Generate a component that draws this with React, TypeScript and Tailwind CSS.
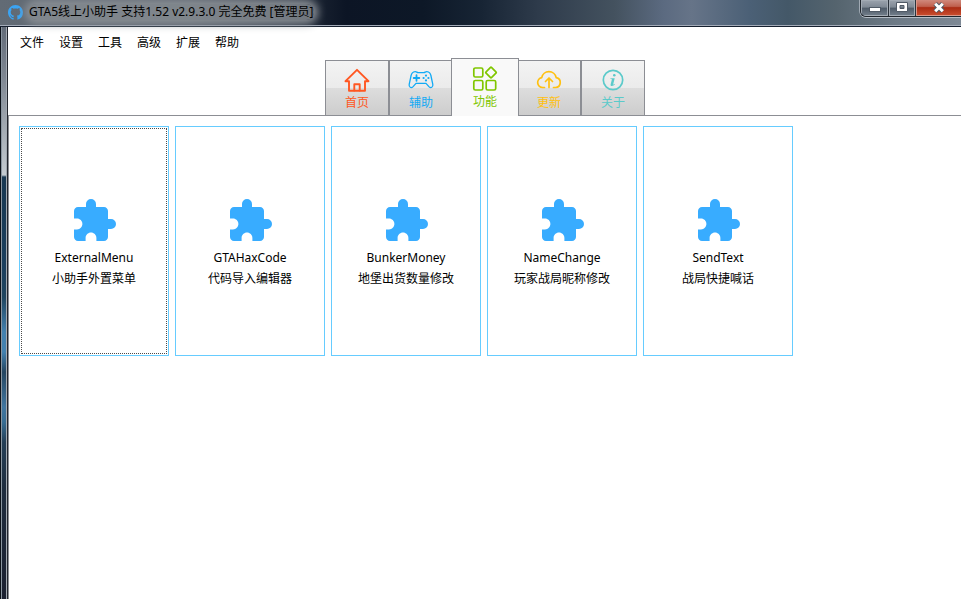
import { useState } from 'react';
import type { ReactNode } from 'react';

const MENUS = ['文件', '设置', '工具', '高级', '扩展', '帮助'];

const CARDS = [
  { name: 'ExternalMenu', desc: '小助手外置菜单' },
  { name: 'GTAHaxCode', desc: '代码导入编辑器' },
  { name: 'BunkerMoney', desc: '地堡出货数量修改' },
  { name: 'NameChange', desc: '玩家战局昵称修改' },
  { name: 'SendText', desc: '战局快捷喊话' },
];

function Glyph({ children }: { children: ReactNode }) {
  return (
    <svg
      viewBox="0 0 26 26"
      className="size-[26px] shrink-0"
      fill="none"
      stroke="currentColor"
      strokeWidth="1.7"
      strokeLinecap="round"
      strokeLinejoin="round"
      aria-hidden="true"
    >
      {children}
    </svg>
  );
}

const HomeGlyph = (
  <Glyph>
    <path d="M1.500 14.200 13 2.800l11.500 11.400H21v9.500H5v-9.500H1.500Z" strokeWidth="1.900" />
    <path d="M10.300 23.500v-6.200h5.400v6.200" strokeWidth="1.900" />
  </Glyph>
);

const PadGlyph = (
  <Glyph>
    <g strokeWidth="1.3">
      <path d="M7.200 4.600C4.400 4.800 3.400 6.400 3 9L1.200 17.400c-.5 2.800 1.900 4.200 3.900 2.200L8 16.400h10l2.900 3.200c2 2 4.400.6 3.900-2.200L23 9c-.4-2.600-1.400-4.200-4.200-4.400-1.300-.1-1.800 1-3.100 1h-5.400c-1.300 0-1.800-1.100-3.100-1Z" />
      <path d="M8.500 8.200v5.600M5.700 11h5.600" strokeWidth="1.800" />
    </g>
    <g fill="currentColor" stroke="none">
      <circle cx="18" cy="8.600" r="1.100" />
      <circle cx="18" cy="13.400" r="1.100" />
      <circle cx="15.600" cy="11" r="1.100" />
      <circle cx="20.400" cy="11" r="1.100" />
    </g>
  </Glyph>
);

const AppsGlyph = (
  <Glyph>
    <rect x="1.800" y="2" width="9" height="9" rx="1.500" />
    <rect x="1.800" y="14.500" width="9" height="9.500" rx="1.500" />
    <rect x="14.200" y="14.500" width="9.500" height="9.500" rx="1.500" />
    <path d="m18.300 1.600-4.200 4.200a1 1 0 0 0 0 1.400l4.200 4.200a1 1 0 0 0 1.400 0l4.200-4.200a1 1 0 0 0 0-1.400l-4.200-4.200a1 1 0 0 0-1.400 0Z" />
  </Glyph>
);

const CloudGlyph = (
  <Glyph>
    <path d="M8.500 20.500H6.500a5 5 0 0 1-.8-9.900 7.400 7.400 0 0 1 14.500 0 5 5 0 0 1-.7 9.900h-2" />
    <path d="M13 20.500v-9M9.500 14.500 13 11l3.500 3.500" />
  </Glyph>
);

const InfoGlyph = (
  <Glyph>
    <circle cx="13" cy="13" r="9.700" />
    <g fill="currentColor" stroke="none">
      <circle cx="14.300" cy="8.300" r="1.300" />
      <path d="M10.300 11.200h4.400l-1.500 6c-.1.500.5.600 1.500-.3l.4.400c-2.200 2.500-5 1.900-4.500.1l1.200-4.700c.2-.8-.3-.9-1.500-.9Z" />
    </g>
  </Glyph>
);

const TABS = [
  { label: '首页', color: 'text-[#ff5722]', icon: HomeGlyph },
  { label: '辅助', color: 'text-[#12aaf5]', icon: PadGlyph },
  { label: '功能', color: 'text-[#80c600]', icon: AppsGlyph },
  { label: '更新', color: 'text-[#ffc010]', icon: CloudGlyph },
  { label: '关于', color: 'text-[#5bcaca]', icon: InfoGlyph },
];

function TitleBar() {
  return (
    <header className="flex h-[27px] shrink-0 items-start justify-between border-b border-[#16202f] bg-[linear-gradient(90deg,#626b75_0%,#59636d_20%,#333d4a_30%,#141d2c_34%,#0c1525_36%,#0d1827_44%,#172434_50%,#2e3b4b_56%,#44525f_64%,#5b6a80_69%,#667488_72%,#4b6076_78%,#445868_82%,#55646e_87%,#6d7a86_93%,#7e8995_100%)] shadow-[inset_0_-1px_#a4acb9]">
      <div className="flex h-6 items-center pl-2">
        <svg viewBox="0 0 16 16" className="mr-[6px] size-[15px]" fill="#3ba4f3" aria-hidden="true">
          <path d="M8 0C3.580 0 0 3.580 0 8c0 3.540 2.290 6.530 5.470 7.590.4.070.550-.170.550-.380 0-.190-.010-.820-.010-1.490-2.010.370-2.530-.490-2.690-.940-.090-.230-.480-.940-.820-1.130-.280-.150-.680-.520-.010-.530.630-.010 1.080.580 1.230.820.720 1.210 1.870.870 2.330.660.070-.520.280-.870.510-1.070-1.780-.2-3.640-.890-3.640-3.950 0-.870.310-1.590.820-2.150-.080-.2-.360-1.020.080-2.120 0 0 .670-.210 2.200.820.640-.180 1.320-.270 2-.270s1.360.090 2 .270c1.530-1.040 2.200-.820 2.200-.820.440 1.100.160 1.920.080 2.120.510.560.820 1.270.820 2.150 0 3.070-1.870 3.750-3.650 3.950.290.250.540.730.540 1.480 0 1.070-.010 1.930-.010 2.200 0 .210.150.460.550.380A8.010 8.010 0 0 0 16 8c0-4.420-3.580-8-8-8Z" />
        </svg>
        <h1 className="rounded-full bg-[#8b9096]/75 text-xs leading-4 whitespace-nowrap shadow-[0_0_8px_4px_#8b9096]">
          GTA5线上小助手 支持1.52 v2.9.3.0 完全免费 [管理员]
        </h1>
      </div>
      <div className="flex h-[17px] overflow-hidden rounded-bl-md border-b border-l border-[#20262d] shadow-[0_1px_#b4bcc5,-1px_0_#a0a9b3]">
        <button
          aria-label="最小化"
          className="flex w-7 items-center justify-center border-r border-[#2b333c] bg-[linear-gradient(#9ba3ad_0%,#7f8994_45%,#4f5b68_50%,#74808c_100%)] shadow-[inset_0_0_0_1px_#a3abb4]"
        >
          <svg viewBox="0 0 12 12" className="size-3" aria-hidden="true">
            <rect x="0.500" y="5.500" width="11" height="4" fill="#fff" stroke="#505a66" />
          </svg>
        </button>
        <button
          aria-label="最大化"
          className="flex w-[27px] items-center justify-center border-r border-[#2b333c] bg-[linear-gradient(#9ba3ad_0%,#7f8994_45%,#4f5b68_50%,#74808c_100%)] shadow-[inset_0_0_0_1px_#a3abb4]"
        >
          <svg viewBox="0 0 12 12" className="size-3" aria-hidden="true">
            <path fillRule="evenodd" d="M.5.500h11v9H.5ZM4 3.500v3h4v-3Z" fill="#fff" stroke="#505a66" />
          </svg>
        </button>
        <button
          aria-label="关闭"
          className="flex w-[45px] items-center justify-center bg-[linear-gradient(#d0897c_0%,#c0604e_40%,#aa2c14_48%,#cc5030_100%)] shadow-[inset_1px_-1px_#d9988a]"
        >
          <svg viewBox="0 0 14 12" className="h-3 w-[14px]" aria-hidden="true">
            <path d="m3.200 1.800 7.600 7.400m0-7.400-7.600 7.400" stroke="#505a66" strokeWidth="5" />
            <path d="m3.200 1.800 7.600 7.400m0-7.400-7.600 7.400" stroke="#fff" strokeWidth="3" />
          </svg>
        </button>
      </div>
    </header>
  );
}

export default function App() {
  const [active, setActive] = useState(2);
  const [focused, setFocused] = useState(0);

  return (
    <div className="flex min-h-screen flex-col bg-white font-['Noto_Sans','Noto_Sans_CJK_SC',sans-serif] text-xs text-black">
      <TitleBar />
      <div className="flex grow">
        <div className="w-2 shrink-0 border-r border-l border-r-[#20242c] border-l-[#0c1118] bg-[linear-gradient(180deg,#626b78_0px,#7f8792_50px,#c4cbd1_148px,#183852_150px,#1b3f5e_240px,#20455f_270px,#4381af_305px,#4381af_325px,#254661_345px,#4176a0_380px,#386d93_395px,#253f57_415px,#1f2d3f_460px,#1b2030_572px)] shadow-[inset_1px_0_#8a95a0,inset_-1px_0_#a3a9b1]" />
        <div className="flex min-w-0 grow flex-col">
          <nav className="flex h-[31px] items-center gap-[15px] px-3">
            {MENUS.map((m) => (
              <button key={m}>{m}</button>
            ))}
          </nav>
          <div className="flex grow flex-col">
            <div role="tablist" className="flex h-[58px] items-end justify-center border-b border-[#8c8e94] pl-px">
              {TABS.map((tab, i) => (
                <button
                  key={tab.label}
                  role="tab"
                  aria-selected={active === i}
                  onClick={() => setActive(i)}
                  className={
                    active === i
                      ? `${tab.color} z-10 -mx-0.5 -mb-px flex h-[58px] w-[68px] flex-col items-center border border-b-0 border-[#8c8e94] bg-[#f9f9f9] pt-[7px]`
                      : `${tab.color} flex h-[55px] w-16 flex-col items-center border border-b-0 border-[#8c8e94] bg-[linear-gradient(#f3f3f3_0%,#ebebeb_50%,#dddddd_50%,#cdcdcd_100%)] pt-[6px]`
                  }
                >
                  {tab.icon}
                  <span className="leading-5">{tab.label}</span>
                </button>
              ))}
            </div>
            <main className="flex grow flex-wrap content-start gap-[6px] border-l border-[#8c8e94] p-[10px]">
              {CARDS.map((card, i) => (
                <button
                  key={card.name}
                  onClick={() => setFocused(i)}
                  className="flex h-[230px] w-[150px] border border-[#66ccff] p-px outline-none"
                >
                  <span
                    className={
                      focused === i
                        ? 'flex h-full grow flex-col items-center justify-center border border-dotted border-[#4a4a4a] pt-1'
                        : 'flex h-full grow flex-col items-center justify-center border border-transparent pt-1'
                    }
                  >
                    <svg viewBox="0 0 24 24" className="size-12" fill="#38acff" aria-hidden="true">
                      <path d="M20.500 11H19V7c0-1.100-.9-2-2-2h-4V3.500a2.500 2.500 0 0 0-5 0V5H4c-1.100 0-2 .9-2 2v3.800h1.500c1.490 0 2.700 1.210 2.700 2.700s-1.210 2.700-2.700 2.700H2V20c0 1.100.9 2 2 2h3.800v-1.500c0-1.490 1.210-2.700 2.700-2.700s2.700 1.210 2.700 2.700V22H17c1.100 0 2-.9 2-2v-4h1.500a2.500 2.500 0 0 0 0-5Z" />
                    </svg>
                    <span className="mt-0.5 leading-[21px]">{card.name}</span>
                    <span className="leading-[21px]">{card.desc}</span>
                  </span>
                </button>
              ))}
            </main>
          </div>
        </div>
      </div>
    </div>
  );
}
